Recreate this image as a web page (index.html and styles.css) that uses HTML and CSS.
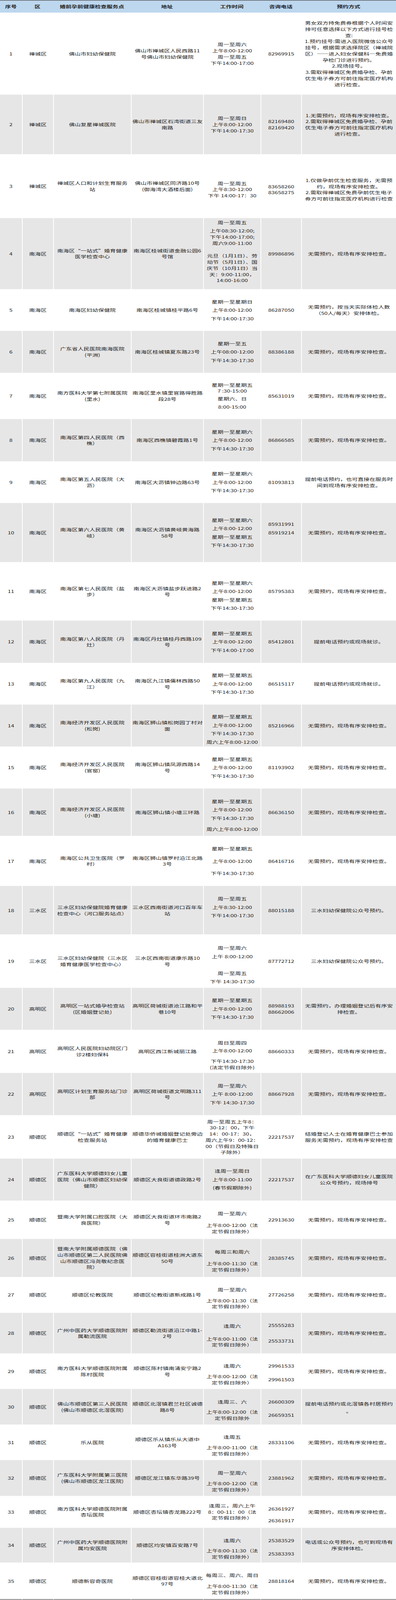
FILE: index.html
```html
<!DOCTYPE html>
<html lang="zh-CN">
<head>
<meta charset="utf-8">
<title>婚前孕前健康检查服务点</title>
<link rel="stylesheet" href="styles.css">
</head>
<body>
<div class="viewport">
<div class="fit">
<table class="sheet">
<colgroup>
<col class="c-no"><col class="c-area"><col class="c-site"><col class="c-addr"><col class="c-time"><col class="c-tel"><col class="c-way">
</colgroup>
<thead>
<tr><th>序号</th><th>区</th><th>婚前孕前健康检查服务点</th><th>地址</th><th>工作时间</th><th>咨询电话</th><th>预约方式</th></tr>
</thead>
<tbody>
<tr>
<td>1</td><td>禅城区</td><td>佛山市妇幼保健院</td>
<td>佛山市禅城区人民西路11<br>号佛山市妇幼保健院</td>
<td>周一至周六<br>上午8:00-12:00<br>周一至周五<br>下午14:00-17:00</td>
<td>82969915</td>
<td>男女双方持免费券根据个人时间安<br>排可任意选择以下方式进行挂号检<br>查:<br>1.预约挂号:需进入医院微信公众号<br>挂号，根据需求选择院区（禅城院<br>区）——进入妇女保健科—免费婚<br>孕检门诊进行预约。<br>2.现场挂号。<br>3.需取得禅城区免费婚孕检、孕前<br>优生电子券方可前往指定医疗机构<br>进行检查。</td>
</tr>
<tr>
<td>2</td><td>禅城区</td><td>佛山复星禅城医院</td>
<td>佛山市禅城区石湾街道三友<br>南路</td>
<td>周一至周日<br>上午8:00-12:00<br>下午14:00-17:30</td>
<td>82169480<br>82169420</td>
<td>1.无需预约，现场有序安排检查。<br>2.需取得禅城区免费婚孕检、孕前<br>优生电子券方可前往指定医疗机构<br>进行检查。</td>
</tr>
<tr>
<td>3</td><td>禅城区</td><td>禅城区人口和计划生育服务<br>站</td>
<td>佛山市禅城区同济路10号<br>(御海湾大酒楼后面)</td>
<td class="pt24">周一至周五<br>上午8:30-12:00<br>下午 14:00-17：30</td>
<td class="pt24">83658260<br>83658275</td>
<td class="pt24">1.仅做孕前优生检查服务，无需预<br>约，现场有序安排检查。<br>2.需取得禅城区免费孕前优生电子<br>券方可前往指定医疗机构进行检查</td>
</tr>
<tr>
<td>4</td><td>南海区</td><td>南海区“一站式”婚育健康<br>医学检查中心</td>
<td>南海区桂城街道金融公园6<br>号馆</td>
<td class="pb16"><p>周一至周五</p><p class="mt8">上午08:30-12:00;</p><p>下午14:00-17:00;</p><p>周六9:00-11:00</p><p class="mt23">元旦（1月1日）、劳</p><p>动节（5月1日）、国</p><p>庆节（10月1日）当</p><p>天：9:00-11:00，</p><p>14:00-16:00</p></td>
<td>89986896</td>
<td>无需预约，现场有序安排检查。</td>
</tr>
<tr>
<td>5</td><td>南海区</td><td>南海区妇幼保健院</td>
<td>南海区桂城镇桂平路6号</td>
<td class="t30">星期一至星期日<br>上午8:00-12:00<br>下午14:00-17:30</td>
<td>86287050</td>
<td>无需预约，按当天实际体检人数<br>（50人/每天）安排体检。</td>
</tr>
<tr>
<td>6</td><td>南海区</td><td>广东省人民医院南海医院<br>(平洲)</td>
<td>南海区桂城镇夏东路23号</td>
<td class="t30">星期一至五<br>上午08:00-12:00<br>下午14:30-17:30</td>
<td>88386188</td>
<td>无需预约，现场有序安排检查。</td>
</tr>
<tr>
<td>7</td><td>南海区</td><td>南方医科大学第七附属医院<br>(里水)</td>
<td>南海区里水镇里官路得胜路<br>段28号</td>
<td><p>星期一至星期五</p><p>7 :30-15:00</p><p class="mt5">星期六、日</p><p class="mt8">8:00-15:00</p></td>
<td>85631019</td>
<td>无需预约，现场有序安排检查。</td>
</tr>
<tr>
<td>8</td><td>南海区</td><td>南海区第四人民医院（西<br>樵）</td>
<td>南海区西樵镇碧霞路1号</td>
<td class="t30">星期一至星期六<br>上午8:00-12:00<br>下午14:30-17:30</td>
<td>86866585</td>
<td>无需预约，现场有序安排检查。</td>
</tr>
<tr>
<td>9</td><td>南海区</td><td>南海区第五人民医院（大<br>沥）</td>
<td>南海区大沥镇钟边路63号</td>
<td class="t30">星期一至星期六<br>上午8:00-12:00<br>下午14:30-17:30</td>
<td>81093813</td>
<td>提前电话预约，也可直接在服务时<br>间到现场有序安排检查。</td>
</tr>
<tr>
<td>10</td><td>南海区</td><td>南海区第六人民医院（黄<br>岐）</td>
<td>南海区大沥镇黄岐黄海路<br>58号</td>
<td class="t30">星期一至星期六<br>上午8:00-12:00<br>星期一至星期五<br>下午14:30-17:30</td>
<td class="t30 pb30">85931991<br>85919214</td>
<td>无需预约，现场有序安排检查。</td>
</tr>
<tr>
<td>11</td><td>南海区</td><td>南海区第七人民医院（盐<br>步）</td>
<td>南海区大沥镇盐步跃进路2<br>号</td>
<td class="t30 pt30">星期一至星期六<br>上午8:00-12:00<br>星期一至星期五<br>下午14:30-17:30</td>
<td>85795383</td>
<td>无需预约，现场有序安排检查。</td>
</tr>
<tr>
<td>12</td><td>南海区</td><td>南海区第八人民医院（丹<br>灶）</td>
<td>南海区丹灶镇桂丹西路109<br>号</td>
<td class="t30">星期一至星期五<br>上午8:00-12:00<br>下午14:00-17:00</td>
<td>85412801</td>
<td>提前电话预约或现场就诊。</td>
</tr>
<tr>
<td>13</td><td>南海区</td><td>南海区第九人民医院（九<br>江）</td>
<td>南海区九江镇儒林西路50<br>号</td>
<td class="t30">星期一至星期五<br>上午8:00-12:00<br>下午14:30-17:30</td>
<td>86515117</td>
<td>提前电话预约或现场就诊。</td>
</tr>
<tr>
<td>14</td><td>南海区</td><td>南海经济开发区人民医院<br>(松岗)</td>
<td>南海区狮山镇松岗园丁村对<br>面</td>
<td class="t30 pt28">星期一至星期五<br>上午8:00-12:00<br>下午14:30-17:30<br>周六上午8:00-12:00</td>
<td>85216966</td>
<td>无需预约，现场有序安排检查。</td>
</tr>
<tr>
<td>15</td><td>南海区</td><td>南海经济开发区人民医院<br>(官窑)</td>
<td>南海区狮山镇凤源西路14<br>号</td>
<td class="t30">星期一至星期五<br>上午8:00-12:00<br>下午14:30-17:30</td>
<td>81193902</td>
<td>无需预约，现场有序安排检查。</td>
</tr>
<tr>
<td>16</td><td>南海区</td><td>南海经济开发区人民医院<br>(小塘)</td>
<td>南海区狮山镇小塘三环路</td>
<td class="t30 pt21"><p>星期一至星期五</p><p>上午8:00-12:00</p><p>下午14:30-17:30</p><p class="mt9">周六上午8:00-12:00</p></td>
<td>86636150</td>
<td>无需预约，现场有序安排检查。</td>
</tr>
<tr>
<td>17</td><td>南海区</td><td>南海区公共卫生医院（罗<br>村）</td>
<td>南海区狮山镇罗村沿江北路<br>3号</td>
<td class="t44">星期一至星期五<br>上午8:00-12:00<br>下午14:30-17:30</td>
<td>86416716</td>
<td>无需预约，现场有序安排检查。</td>
</tr>
<tr>
<td>18</td><td>三水区</td><td>三水区妇幼保健院婚育健康<br>检查中心（河口服务站点）</td>
<td>三水区西南街道河口百年车<br>站</td>
<td class="t30 pb21">周一至周五<br>上午8:30-12:00<br>下午14:00-17:30</td>
<td>88015188</td>
<td>三水妇幼保健院公众号预约。</td>
</tr>
<tr>
<td>19</td><td>三水区</td><td>三水区妇幼保健院（三水区<br>婚育健康医学检查中心）</td>
<td>三水区西南街道康乐路10<br>号</td>
<td class="t30 pt26"><p>周一至周六</p><p>上午 8:00-12:00</p><p class="mt30">周一至周五</p><p>下午 14:30-17:30</p></td>
<td>87772712</td>
<td>三水妇幼保健院公众号预约。</td>
</tr>
<tr>
<td>20</td><td>高明区</td><td>高明区一站式婚孕检查站<br>(区婚姻登记处)</td>
<td>高明区荷城街道沧江路和平<br>巷10号</td>
<td class="t30">星期一至星期五<br>上午8:00-12:00<br>下午14:30-17:30</td>
<td>88988193<br>88662006</td>
<td>无需预约，办理婚姻登记后有序安<br>排检查。</td>
</tr>
<tr>
<td>21</td><td>高明区</td><td>高明区人民医院妇幼院区门<br>诊2楼妇保科</td>
<td>高明区西江新城丽江路</td>
<td class="pt26"><p>周日至周四</p><p class="mt7">上午8:00-12:00</p><p class="mt15">下午14:30-17:30</p><p>(法定节假日除外)</p></td>
<td>88660333</td>
<td>无需预约，现场有序安排检查。</td>
</tr>
<tr>
<td>22</td><td>高明区</td><td>高明区计划生育服务站门诊<br>部</td>
<td>高明区荷城街道文明路311<br>号</td>
<td class="t30">周一至周六<br>上午 8:00-12:00<br>下午 14:30-17:30</td>
<td>88667928</td>
<td>无需预约，现场有序安排检查。</td>
</tr>
<tr>
<td>23</td><td>顺德区</td><td>顺德区“一站式”婚育健康<br>检查服务站</td>
<td>顺德华侨城婚姻登记处旁边<br>的婚育健康巴士</td>
<td>周一至周五上午8：<br>30-12：00，下午<br>14：00-17：30，<br>周六上午9：00-12：<br>00（节假日及特殊日<br>子除外）</td>
<td>22217537</td>
<td>结婚登记人士在婚育健康巴士参加<br>服务无需预约，现场有序安排检查</td>
</tr>
<tr>
<td>24</td><td>顺德区</td><td>广东医科大学顺德妇女儿童<br>医院（佛山市顺德区妇幼保<br>健院）</td>
<td>顺德区大良街道德政路2号</td>
<td class="t30">逢周一至周日<br>上午8:00-11:00<br>(春节假期除外)</td>
<td>22217537</td>
<td>在广东医科大学顺德妇女儿童医院<br>公众号预约，现场排号</td>
</tr>
<tr>
<td>25</td><td>顺德区</td><td>暨南大学附属口腔医院（大<br>良医院）</td>
<td>顺德区大良街道环市南路2<br>号</td>
<td class="pt19"><p>周一至周六</p><p class="mt20">上午8:00-12:00（法</p><p>定节假日除外）</p></td>
<td>22913630</td>
<td>无需预约，现场有序安排检查。</td>
</tr>
<tr>
<td>26</td><td>顺德区</td><td>暨南大学附属顺德医院（佛<br>山市顺德区第二人民医院佛<br>山市顺德区冯尧敬纪念医<br>院）</td>
<td>顺德区容桂街道桂洲大道东<br>50号</td>
<td class="pt20"><p>每周三和周六</p><p class="mt20">上午8:00-11:30（法</p><p>定节假日除外）</p></td>
<td>28385745</td>
<td>无需预约，现场有序安排检查。</td>
</tr>
<tr>
<td>27</td><td>顺德区</td><td>顺德区伦教医院</td>
<td>顺德区伦教街道新成路1号</td>
<td class="pt23"><p>周一至周六</p><p class="mt16">上午8:00-11:30（法</p><p>定节假日除外）</p></td>
<td>27726258</td>
<td>无需预约，现场有序安排检查。</td>
</tr>
<tr>
<td>28</td><td>顺德区</td><td>广州中医药大学顺德医院附<br>属勒流医院</td>
<td>顺德区勒流街道沿江中路1-<br>2号</td>
<td class="pt16"><p>逢周六</p><p class="mt24">上午8:00-11:00（法</p><p>定节假日除外）</p></td>
<td><p>25555283</p><p class="mt35">25533731</p></td>
<td>无需预约，现场有序安排检查。</td>
</tr>
<tr>
<td>29</td><td>顺德区</td><td>南方医科大学顺德医院附属<br>陈村医院</td>
<td>顺德区陈村镇南涌安宁路2<br>号</td>
<td class="pt23"><p>逢周六</p><p class="mt16">上午8:00-12:00（法</p><p>定节假日除外）</p></td>
<td class="pt12"><p>29961533</p><p class="mt27">29961503</p></td>
<td>无需预约，现场有序安排检查。</td>
</tr>
<tr>
<td>30</td><td>顺德区</td><td>佛山市顺德区第三人民医院<br>(佛山市顺德区北滘医院)</td>
<td>顺德区北滘镇君兰社区诚德<br>路8号</td>
<td class="pt24"><p>逢周三、六</p><p class="mt15">上午8:00-12:00（法</p><p>定节假日除外</p></td>
<td class="pt13"><p>26600309</p><p class="mt26">26659351</p></td>
<td class="pt5"><p>提前电话预约或北滘镇各村居预约</p><p class="mt5">。</p></td>
</tr>
<tr>
<td>31</td><td>顺德区</td><td>乐从医院</td>
<td>顺德区乐从镇乐从大道中<br>A163号</td>
<td class="pt23"><p>逢周五</p><p class="mt16">上午8:00-11:00（法</p><p>定节假日除外）</p></td>
<td>28331106</td>
<td>无需预约，现场有序安排检查。</td>
</tr>
<tr>
<td>32</td><td>顺德区</td><td>广东医科大学附属第三医院<br>(佛山市顺德区龙江医院)</td>
<td>顺德区龙江镇东华路39号</td>
<td class="pt23"><p>周一至周六</p><p class="mt16">上午8:00-12:00（法</p><p>定节假日除外）</p></td>
<td>23881962</td>
<td>无需预约，现场有序安排检查。</td>
</tr>
<tr>
<td>33</td><td>顺德区</td><td>南方医科大学顺德医院附属<br>杏坛医院</td>
<td>顺德区杏坛镇杏龙路222号</td>
<td>逢周三，周六上午<br>8：00-11：00（法<br>定节假日除外）</td>
<td class="pt20"><p>26361927</p><p class="mt20">26361917</p></td>
<td>无需预约，现场有序安排检查。</td>
</tr>
<tr>
<td>34</td><td>顺德区</td><td>广州中医药大学顺德医院附<br>属均安医院</td>
<td>顺德区均安镇百安路7号</td>
<td class="pt26"><p>逢周六</p><p class="mt14">上午8:00-11:30（法</p><p>定节假日除外）</p></td>
<td class="pt14"><p>25383529</p><p class="mt25">25383393</p></td>
<td>电话或公众号预约，也可到现场有<br>序安排体检。</td>
</tr>
<tr>
<td>35</td><td>顺德区</td><td>顺德新容奇医院</td>
<td>顺德区容桂街道容桂大道北<br>97号</td>
<td class="pt21"><p>每周三、周六、周日</p><p class="mt18">上午8:00-11:30（法</p><p>定节假日除外）</p></td>
<td>28818164</td>
<td>无需预约，现场有序安排检查。</td>
</tr>
</tbody>
</table>
</div>
</div>
</body>
</html>
```

FILE: styles.css
```css
html, body {
  margin: 0;
  padding: 0;
  background: #ffffff;
}

body {
  font-family: "Noto Sans CJK SC", "Noto Sans", "Liberation Sans", sans-serif;
  font-size: 15px;
  color: #222222;
}

/* the sheet is 5716px tall; the frame clips to the window height */
.viewport {
  width: 1014px;
  height: 100vh;
  max-height: 5716px;
  overflow: hidden;
}

.fit {
  width: 1014px;
  transform-origin: 0 0;
}

@media (max-height: 5715px) {
  .fit {
    transform: scaleY(0.716585);
  }
}

.sheet {
  width: 1014px;
  table-layout: fixed;
  border-collapse: separate;
  border-spacing: 0;
}

.c-no { width: 56px; }
.c-area { width: 80px; }
.c-site { width: 199px; }
.c-addr { width: 185px; }
.c-time { width: 147px; }
.c-tel { width: 104px; }
.c-way { width: 243px; }

.sheet th {
  box-sizing: border-box;
  height: 45px;
  padding: 0 2px;
  background: #bdd7ee;
  border-top: 2px solid #5a5a5a;
  font-weight: bold;
  line-height: 22px;
  text-align: center;
  vertical-align: middle;
  white-space: nowrap;
}

.sheet td {
  box-sizing: border-box;
  padding: 0 2px;
  line-height: 22px;
  text-align: center;
  vertical-align: middle;
  white-space: nowrap;
}

.sheet td + td {
  border-left: 2px solid #ffffff;
}

.sheet tbody tr:nth-child(even) {
  background: #e7e6e6;
}

.sheet tbody tr:last-child td {
  border-bottom: 2px solid #5a5a5a;
}

.sheet p {
  margin: 0;
}

/* line spacing variants for the time / phone cells */
.t30 { line-height: 30px !important; }
.t44 { line-height: 44px !important; }

/* vertical offset of a cell's content */
.pt5 { padding-top: 5px !important; }
.pt12 { padding-top: 12px !important; }
.pt13 { padding-top: 13px !important; }
.pt14 { padding-top: 14px !important; }
.pt16 { padding-top: 16px !important; }
.pt19 { padding-top: 19px !important; }
.pt20 { padding-top: 20px !important; }
.pt21 { padding-top: 21px !important; }
.pt23 { padding-top: 23px !important; }
.pt24 { padding-top: 24px !important; }
.pt26 { padding-top: 26px !important; }
.pt28 { padding-top: 28px !important; }
.pt30 { padding-top: 30px !important; }
.pb16 { padding-bottom: 16px !important; }
.pb21 { padding-bottom: 21px !important; }
.pb30 { padding-bottom: 30px !important; }

/* extra space before a line */
.mt5 { margin-top: 5px !important; }
.mt7 { margin-top: 7px !important; }
.mt8 { margin-top: 8px !important; }
.mt9 { margin-top: 9px !important; }
.mt14 { margin-top: 14px !important; }
.mt15 { margin-top: 15px !important; }
.mt16 { margin-top: 16px !important; }
.mt18 { margin-top: 18px !important; }
.mt20 { margin-top: 20px !important; }
.mt23 { margin-top: 23px !important; }
.mt24 { margin-top: 24px !important; }
.mt25 { margin-top: 25px !important; }
.mt26 { margin-top: 26px !important; }
.mt27 { margin-top: 27px !important; }
.mt30 { margin-top: 30px !important; }
.mt35 { margin-top: 35px !important; }

/* row heights */
.sheet thead tr { height: 45px; }
.sheet tbody tr:nth-child(1) { height: 293px; }
.sheet tbody tr:nth-child(2) { height: 213px; }
.sheet tbody tr:nth-child(3) { height: 228px; }
.sheet tbody tr:nth-child(4) { height: 254px; }
.sheet tbody tr:nth-child(5) { height: 149px; }
.sheet tbody tr:nth-child(6) { height: 150px; }
.sheet tbody tr:nth-child(7) { height: 165px; }
.sheet tbody tr:nth-child(8) { height: 151px; }
.sheet tbody tr:nth-child(9) { height: 149px; }
.sheet tbody tr:nth-child(10) { height: 211px; }
.sheet tbody tr:nth-child(11) { height: 209px; }
.sheet tbody tr:nth-child(12) { height: 151px; }
.sheet tbody tr:nth-child(13) { height: 149px; }
.sheet tbody tr:nth-child(14) { height: 150px; }
.sheet tbody tr:nth-child(15) { height: 150px; }
.sheet tbody tr:nth-child(16) { height: 169px; }
.sheet tbody tr:nth-child(17) { height: 179px; }
.sheet tbody tr:nth-child(18) { height: 173px; }
.sheet tbody tr:nth-child(19) { height: 191px; }
.sheet tbody tr:nth-child(20) { height: 150px; }
.sheet tbody tr:nth-child(21) { height: 154px; }
.sheet tbody tr:nth-child(22) { height: 151px; }
.sheet tbody tr:nth-child(23) { height: 155px; }
.sheet tbody tr:nth-child(24) { height: 150px; }
.sheet tbody tr:nth-child(25) { height: 137px; }
.sheet tbody tr:nth-child(26) { height: 136px; }
.sheet tbody tr:nth-child(27) { height: 128px; }
.sheet tbody tr:nth-child(28) { height: 145px; }
.sheet tbody tr:nth-child(29) { height: 127px; }
.sheet tbody tr:nth-child(30) { height: 127px; }
.sheet tbody tr:nth-child(31) { height: 127px; }
.sheet tbody tr:nth-child(32) { height: 128px; }
.sheet tbody tr:nth-child(33) { height: 114px; }
.sheet tbody tr:nth-child(34) { height: 124px; }
.sheet tbody tr:nth-child(35) { height: 133px; }
```
